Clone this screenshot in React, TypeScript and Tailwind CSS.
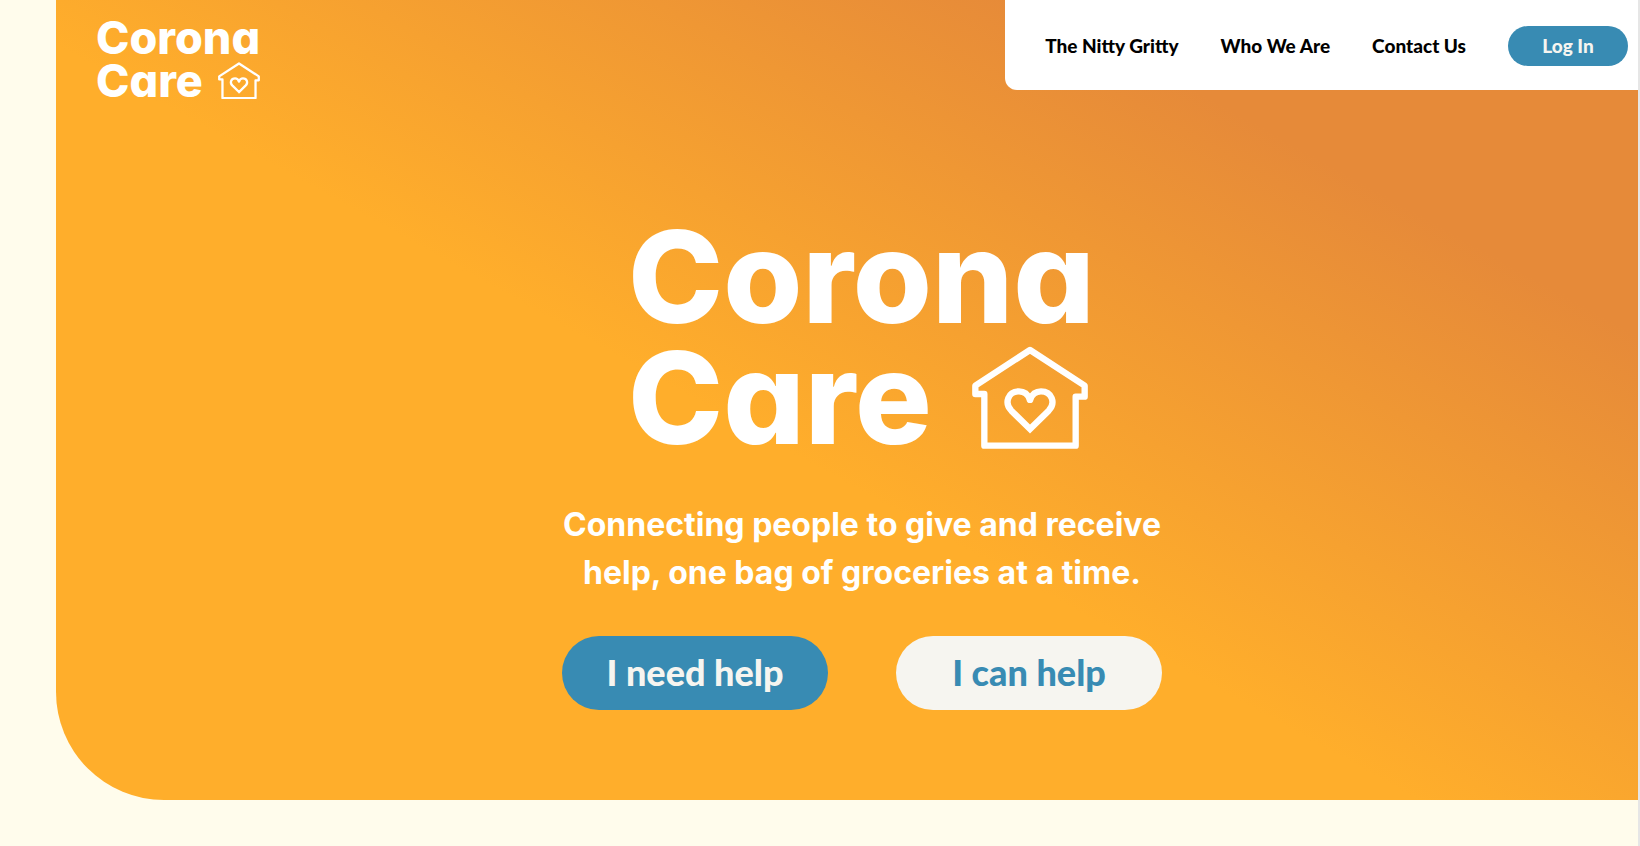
type LogoProps = { size: "small" | "large" };

const logoSizes = {
  small: {
    text: "w-[166px] text-[45px] leading-[43px]",
    house: "ml-[15px] w-[42px] align-[-2px]",
  },
  large: {
    text: "w-[468px] text-[128px] leading-[121px]",
    house: "ml-10 w-[116px] align-[-5px]",
  },
};

function House({ className }: { className: string }) {
  return (
    <svg
      viewBox="0 0 348 310"
      className={className}
      fill="none"
      stroke="currentColor"
      strokeWidth="19"
      strokeLinejoin="round"
      aria-hidden="true"
    >
      <path d="M174 12 L338 119 V152 H311 V299 H37 V144 H10 V119 Z" />
      <path
        strokeLinejoin="miter"
        strokeMiterlimit="2"
        d="M174 249 L118 194 C96 171 108 136 141 136 C157 136 168 145 174 161 C180 145 191 136 207 136 C240 136 252 171 230 194 Z"
      />
      <circle cx="174" cy="161" r="10" fill="currentColor" stroke="none" />
    </svg>
  );
}

function Logo({ size }: LogoProps) {
  const s = logoSizes[size];
  return (
    <span
      className={`${s.text} block font-['Inter',sans-serif] font-extrabold whitespace-nowrap text-white [font-feature-settings:'cv11']`}
    >
      Corona
      <br />
      Care
      <House className={`${s.house} inline-block`} />
    </span>
  );
}

const links = ["The Nitty Gritty", "Who We Are", "Contact Us"];

export default function App() {
  return (
    <div className="min-h-screen border-r-2 border-[#e6e6e6] bg-[#fffcec] pb-[46px] pl-14">
      <div className="flex min-h-[800px] flex-col rounded-bl-[108px] bg-[linear-gradient(209deg,#e68a39_20%,#ffae2b_55%)]">
        <header className="flex items-start justify-between">
          <a href="#" aria-label="Corona Care" className="block pt-4 pl-10">
            <Logo size="small" />
          </a>
          <nav className="flex h-[90px] items-center gap-[42px] rounded-bl-xl bg-white pt-0.5 pr-[10px] pl-10 font-['Lato','Open_Sans',sans-serif] text-[19px] font-black text-black">
            {links.map((l) => (
              <a key={l} href="#">
                {l}
              </a>
            ))}
            <button className="h-10 w-[120px] rounded-full bg-[#388bb3] text-[#f6f5f0]">
              Log In
            </button>
          </nav>
        </header>
        <main className="flex flex-col items-center pt-[114px] pl-[30px]">
          <h1>
            <Logo size="large" />
          </h1>
          <p className="mt-[43px] text-center font-['Inter',sans-serif] text-[32px] leading-12 font-bold text-white">
            Connecting people to give and receive
            <br />
            help, one bag of groceries at a time.
          </p>
          <div className="mt-[39px] flex gap-[68px] font-['Lato','Open_Sans',sans-serif] text-[36px] font-black">
            <button className="h-[74px] w-[266px] rounded-full bg-[#388bb3] pb-0.5 text-[#f6f5f0]">
              I need help
            </button>
            <button className="h-[74px] w-[266px] rounded-full bg-[#f6f5f0] pb-0.5 text-[#388bb3]">
              I can help
            </button>
          </div>
        </main>
      </div>
    </div>
  );
}
